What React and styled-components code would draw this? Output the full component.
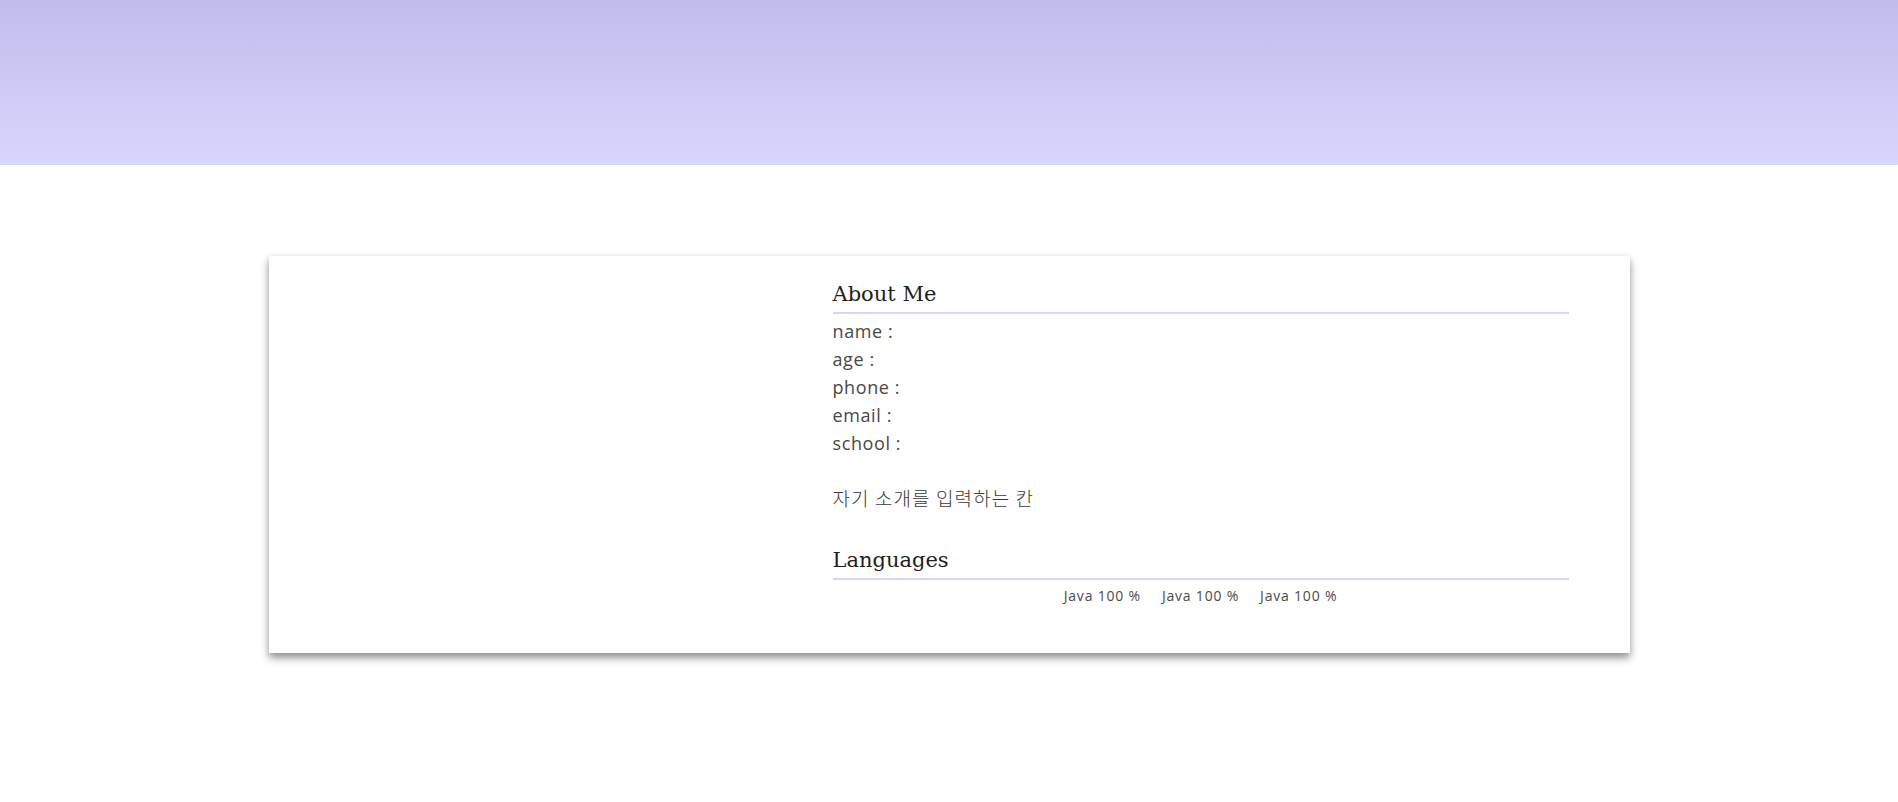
import React from 'react'
import styled, { createGlobalStyle } from 'styled-components'

const GlobalStyle = createGlobalStyle`
  body {
    margin: 0;
    background: #ffffff;
    font-family: 'Open Sans', 'Noto Sans CJK KR', sans-serif;
  }
`

const Header = styled.header({
  height: '165px',
  background: 'linear-gradient(to bottom, #c0bdeb, #d9d6fd)',
})

const Main = styled.main({
  paddingTop: '91px',
  paddingBottom: '150px',
})

const Card = styled.section({
  width: '1361px',
  margin: '0 auto',
  display: 'grid',
  gridTemplateColumns: '564px 736px',
  padding: '24px 0 47px',
  boxSizing: 'border-box',
  background: '#fff',
  boxShadow: '0 5px 8px rgba(0,0,0,0.42), 0 0 6px rgba(0,0,0,0.06)',
})

const PhotoColumn = styled.div({})

const InfoColumn = styled.div({
  display: 'flex',
  flexDirection: 'column',
})

const SectionTitle = styled.h2(({ spaced }) => ({
  margin: spaced ? '34px 0 0' : '0',
  padding: '0 0 4px',
  fontFamily: "'DejaVu Serif', serif",
  fontSize: '21px',
  fontWeight: '400',
  lineHeight: '28px',
  color: '#1e1e1e',
  borderBottom: '2px solid #d8d5fb',
}))

const InfoList = styled.ul({
  listStyle: 'none',
  margin: '3px 0 0',
  padding: '0',
})

const InfoRow = styled.li({
  fontSize: '18px',
  fontWeight: '400',
  letterSpacing: '0.6px',
  lineHeight: '28px',
  color: '#484848',
})

const Intro = styled.p({
  margin: '27px 0 0',
  fontFamily: "'Noto Sans CJK KR', sans-serif",
  fontSize: '19px',
  fontWeight: '300',
  letterSpacing: '1.1px',
  lineHeight: '28px',
  color: '#3a3a3a',
})

const LanguageRow = styled.div({
  display: 'flex',
  justifyContent: 'center',
  gap: '21px',
  marginTop: '6px',
})

const LanguageItem = styled.span({
  fontSize: '14px',
  fontWeight: '400',
  letterSpacing: '0.8px',
  lineHeight: '20px',
  color: '#4a4a4a',
})

const infoFields = ['name', 'age', 'phone', 'email', 'school']
const languages = [
  { name: 'Java', percent: 100 },
  { name: 'Java', percent: 100 },
  { name: 'Java', percent: 100 },
]

export default function App() {
  return (
    <>
      <GlobalStyle />
      <Header />
      <Main>
        <Card>
          <PhotoColumn />
          <InfoColumn>
            <SectionTitle>About Me</SectionTitle>
            <InfoList>
              {infoFields.map(field => (
                <InfoRow key={field}>{field} :</InfoRow>
              ))}
            </InfoList>
            <Intro>자기 소개를 입력하는 칸</Intro>
            <SectionTitle spaced>Languages</SectionTitle>
            <LanguageRow>
              {languages.map((lang, i) => (
                <LanguageItem key={i}>
                  {lang.name} {lang.percent} %
                </LanguageItem>
              ))}
            </LanguageRow>
          </InfoColumn>
        </Card>
      </Main>
    </>
  )
}
